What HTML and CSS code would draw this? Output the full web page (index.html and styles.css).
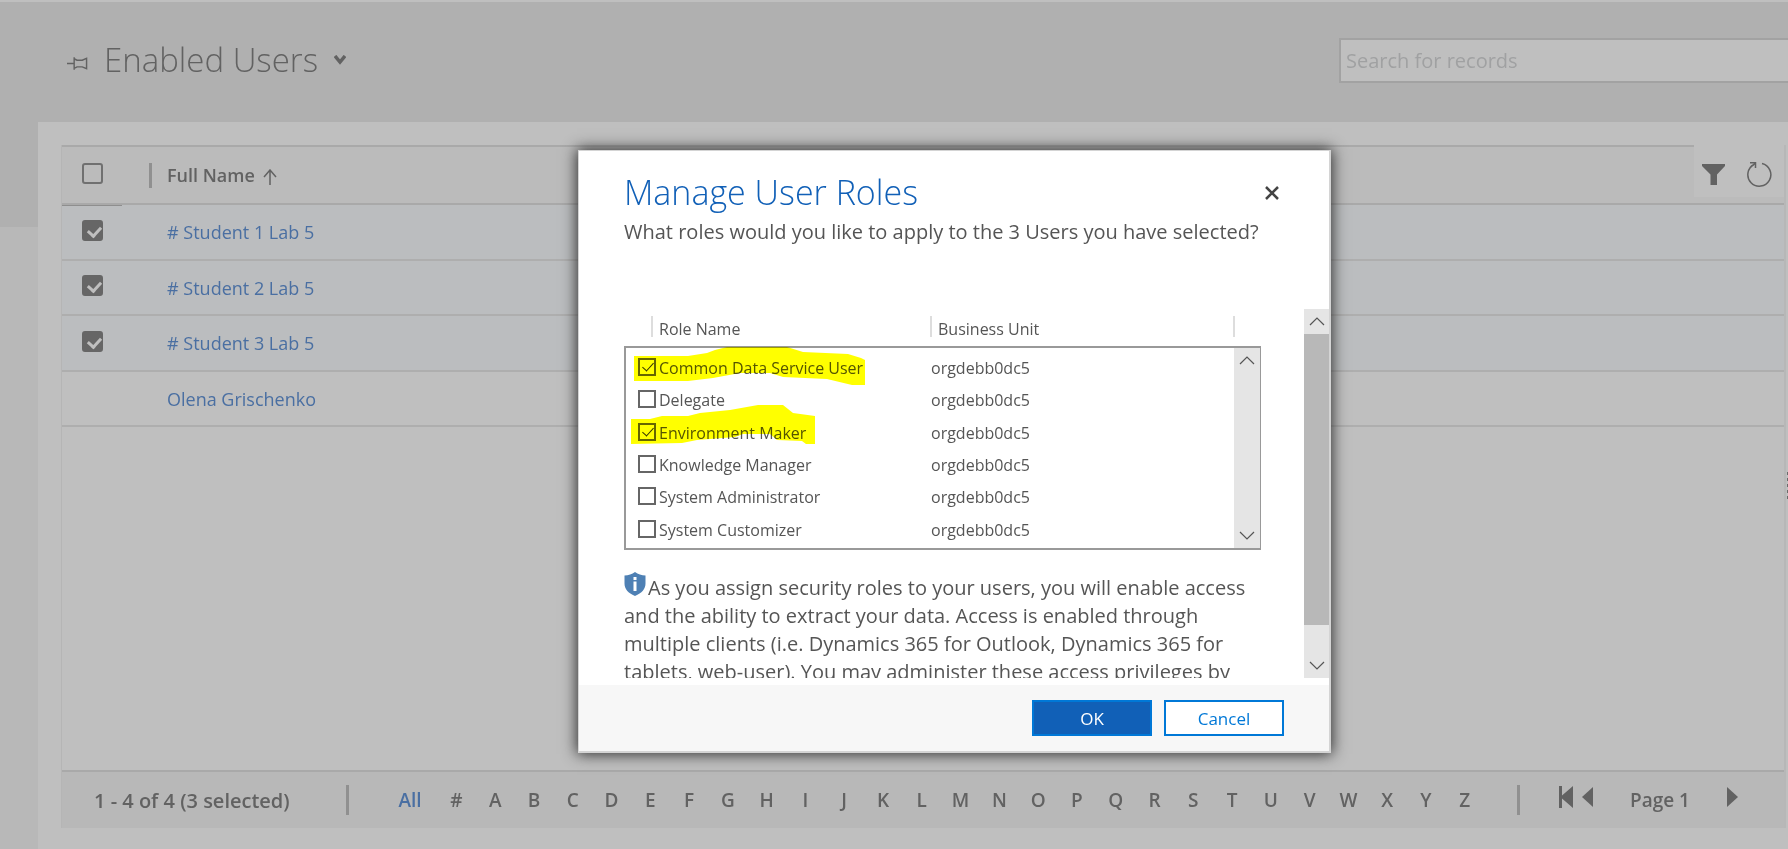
FILE: index.html
```
<!DOCTYPE html>
<html lang="en">
<head>
<meta charset="utf-8">
<title>Enabled Users</title>
<link rel="stylesheet" href="styles.css">
</head>
<body>
<div class="page">
  <header class="topbar">
    <button class="plain-button" aria-label="Pin view">
      <svg class="pin-icon" viewBox="0 0 22 14" fill="none" stroke="currentColor" stroke-width="1.5"><path d="M0 6.5h7M7.500 0v13M7.500 1.500l3 1.500h5.500l4.500-2v11l-4.500-2h-5.500l-3 1.500"/></svg>
    </button>
    <h1 class="view-title">Enabled Users</h1>
    <button class="plain-button view-switch" aria-label="Choose view">
      <svg class="caret-icon" viewBox="0 0 12 10" fill="none" stroke="currentColor" stroke-width="3.500"><path d="M1 1l5 6 5-6"/></svg>
    </button>
    <input class="search" type="text" placeholder="Search for records" aria-label="Search for records">
  </header>
  <div class="workspace">
    <div class="gutter"></div>
    <main class="panel">
      <div class="grid">
        <table class="users">
          <thead>
            <tr>
              <th class="check-cell"><input class="check" type="checkbox" aria-label="Select all"></th>
              <th class="name-head"><span class="name-label">Full Name
                <svg class="sort-icon" viewBox="0 0 14 16" fill="none" stroke="currentColor" stroke-width="1.500"><path d="M7 16V1M1 8l6-7 6 7"/></svg></span></th>
              <th class="tools-cell">
                <div class="tools">
                  <button class="plain-button" aria-label="Filter">
                    <svg class="filter-icon" viewBox="0 0 23 21" fill="currentColor"><path d="M0 0h23v2l-8 8.500V21H8.500V10.500L0 2z"/></svg>
                  </button>
                  <button class="plain-button" aria-label="Refresh">
                    <svg class="refresh-icon" viewBox="0 0 26 25" fill="none" stroke="currentColor" stroke-width="1.500"><path d="M16 1.500A11.500 11.500 0 1 1 8 2.500M4 .8h5.500V6M9.500 1l-4 3.500"/></svg>
                  </button>
                </div>
              </th>
            </tr>
          </thead>
          <tbody>
            <tr class="selected"><td class="check-cell first-cell"><input class="check" type="checkbox" checked aria-label="# Student 1 Lab 5"></td><td colspan="2"><a href="#"># Student 1 Lab 5</a></td></tr>
            <tr class="selected"><td class="check-cell"><input class="check" type="checkbox" checked aria-label="# Student 2 Lab 5"></td><td colspan="2"><a href="#"># Student 2 Lab 5</a></td></tr>
            <tr class="selected"><td class="check-cell"><input class="check" type="checkbox" checked aria-label="# Student 3 Lab 5"></td><td colspan="2"><a href="#"># Student 3 Lab 5</a></td></tr>
            <tr><td class="check-cell"></td><td colspan="2"><a href="#">Olena Grischenko</a></td></tr>
          </tbody>
        </table>
        <footer class="pager">
          <span class="count">1 - 4 of 4 (3 selected)</span>
          <span class="divider"></span>
          <nav class="letters" aria-label="Jump bar">
            <a class="all" href="#">All</a><a href="#">#</a><a href="#">A</a><a href="#">B</a><a href="#">C</a><a href="#">D</a><a href="#">E</a><a href="#">F</a><a href="#">G</a><a href="#">H</a><a href="#">I</a><a href="#">J</a><a href="#">K</a><a href="#">L</a><a href="#">M</a><a href="#">N</a><a href="#">O</a><a href="#">P</a><a href="#">Q</a><a href="#">R</a><a href="#">S</a><a href="#">T</a><a href="#">U</a><a href="#">V</a><a href="#">W</a><a href="#">X</a><a href="#">Y</a><a href="#">Z</a>
          </nav>
          <span class="divider"></span>
          <div class="paging">
            <button class="plain-button" aria-label="First page"><svg class="first-icon" viewBox="0 0 14 22" fill="currentColor"><path d="M0 0h3v9.500L14 0v22L3 12.500V22H0z"/></svg></button>
            <button class="plain-button" aria-label="Previous page"><svg class="step-icon" viewBox="0 0 11 20" fill="currentColor"><path d="M11 0v20L0 10z"/></svg></button>
            <span class="page-label">Page 1</span>
            <button class="plain-button" aria-label="Next page"><svg class="step-icon" viewBox="0 0 11 20" fill="currentColor"><path d="M0 0v20l11-10z"/></svg></button>
          </div>
        </footer>
      </div>
      <span class="grip"></span>
    </main>
  </div>
</div>

<div class="overlay">
  <section class="dialog" role="dialog" aria-modal="true" aria-labelledby="dialog-title">
    <header class="dialog-head">
      <div>
        <h2 class="dialog-title" id="dialog-title">Manage User Roles</h2>
        <p class="dialog-text">What roles would you like to apply to the 3 Users you have selected?</p>
      </div>
      <button class="plain-button close" aria-label="Close">
        <svg class="close-icon" viewBox="0 0 14 14" stroke="currentColor" stroke-width="2.500"><path d="M1 1l12 12M13 1L1 13"/></svg>
      </button>
    </header>
    <div class="dialog-body">
      <div class="body-content">
        <div class="role-head"><span class="role-col">Role Name</span><span class="unit-col">Business Unit</span></div>
        <div class="role-box">
          <div class="roles">
            <label class="role"><input class="box" type="checkbox" checked><span class="role-name">Common Data Service User</span><span>orgdebb0dc5</span></label>
            <label class="role"><input class="box" type="checkbox"><span class="role-name">Delegate</span><span>orgdebb0dc5</span></label>
            <label class="role"><input class="box" type="checkbox" checked><span class="role-name">Environment Maker</span><span>orgdebb0dc5</span></label>
            <label class="role"><input class="box" type="checkbox"><span class="role-name">Knowledge Manager</span><span>orgdebb0dc5</span></label>
            <label class="role"><input class="box" type="checkbox"><span class="role-name">System Administrator</span><span>orgdebb0dc5</span></label>
            <label class="role"><input class="box" type="checkbox"><span class="role-name">System Customizer</span><span>orgdebb0dc5</span></label>
          </div>
          <div class="scrollbar inner-bar">
            <svg class="arrow" viewBox="0 0 16 9" fill="none" stroke="currentColor" stroke-width="1.200"><path d="M1 8l7-7 7 7"/></svg>
            <svg class="arrow" viewBox="0 0 16 9" fill="none" stroke="currentColor" stroke-width="1.200"><path d="M1 1l7 7 7-7"/></svg>
          </div>
          <svg class="marker" viewBox="0 0 250 110" fill="#ff0"><path d="M10 10L64 10 83 7 91 4 103 1 163 1 179 6 224 8 237 12 241 14V39H228L203 33 159 31 146 27H116L89 32 64 35H10zM7 73H26L38 70H64L76 67 106 64 134 59H159L169 67 191 70V98H182L178 95 153 94 146 88H119L111 91 73 94 58 97 7 98z"/></svg>
        </div>
        <p class="dialog-text note"><svg class="shield" viewBox="0 0 22 24"><path d="M11 0c3 2.500 6.500 3.200 10.500 3.500v8C21.500 17 18 21 11 24 4 21 .5 17 .5 11.500v-8C4.500 3.200 8 2.500 11 0z" fill="#4e80b4"/><path d="M9.500 5h3v3h-3zM9.500 9.500h3V19h-3z" fill="#fff"/></svg>As you assign security roles to your users, you will enable access and the ability to extract your data. Access is enabled through multiple clients (i.e. Dynamics 365 for Outlook, Dynamics 365 for tablets, web-user). You may administer these access privileges by</p>
      </div>
      <div class="scrollbar outer-bar">
        <svg class="arrow" viewBox="0 0 16 9" fill="none" stroke="currentColor" stroke-width="1.200"><path d="M1 8l7-7 7 7"/></svg>
        <span class="thumb"></span>
        <svg class="arrow" viewBox="0 0 16 9" fill="none" stroke="currentColor" stroke-width="1.200"><path d="M1 1l7 7 7-7"/></svg>
      </div>
    </div>
    <footer class="dialog-foot">
      <button class="action primary">OK</button>
      <button class="action">Cancel</button>
    </footer>
  </section>
</div>
</body>
</html>
```
FILE: styles.css
```
* { box-sizing: border-box; }
body {
  margin: 0;
  font-family: "Open Sans", "Noto Sans", sans-serif;
  font-size: 18px;
  color: #626262;
  background: #bfbfbf;
}
h1, h2, p { margin: 0; font-weight: 400; }
a { color: #4a6fa2; text-decoration: none; }
svg { display: block; flex: none; }
.plain-button { padding: 0; border: 0; background: none; color: inherit; flex: none; }

.page { display: flex; flex-direction: column; min-height: 100vh; border-top: 2px solid #bfbfbf; }
.topbar {
  display: flex;
  align-items: center;
  height: 120px;
  padding: 0 0 4px 67px;
  background: #b0b0b0;
}
.pin-icon { width: 21px; height: 14px; margin-top: 8px; }
.view-title { margin-left: 16px; font-size: 33px; font-weight: 300; line-height: 48px; }
.view-switch { margin: 0 auto 0 16px; }
.caret-icon { width: 12px; height: 10px; }
.search {
  width: 449px;
  height: 45px;
  padding: 0 5px;
  border: 2px solid #a2a2a2;
  border-right: 0;
  background: #bfbfbf;
  font: inherit;
  font-size: 20px;
}
.search::placeholder { color: #a0a1a2; opacity: 1; }

.workspace { display: flex; flex: 1; }
.gutter { width: 38px; background: linear-gradient(#b0b0b0 105px, #b8b8b8 105px); }
.panel { position: relative; display: flex; flex: 1; padding: 23px 2px 21px 23px; background: #bfbfbf; }
.grip {
  position: absolute;
  top: 350px;
  right: 0;
  width: 1px;
  height: 27px;
  background: repeating-linear-gradient(#6a6a6a 0 3px, transparent 3px 6px);
}
.grid {
  display: flex;
  flex: 1;
  flex-direction: column;
  justify-content: space-between;
  border-left: 1px solid #b5b5b5;
  border-right: 2px solid #b7b7b7;
}
.users { width: 100%; border-spacing: 0; text-align: left; }
th, td { padding: 0; }
th { height: 60px; background: #bbb; border: solid #a9a9a9; border-width: 2px 0; font-weight: 600; }
td { height: 56px; border-bottom: 2px solid #aeaeae; }
tr:nth-child(even) td { height: 55px; }
.selected { background: #bbbdbf; }
.check-cell { width: 87px; padding: 0 0 4px 20px; }
.first-cell { background: linear-gradient(90deg, #8e8e8e 60px, transparent 60px) top / 100% 1px no-repeat; }
.name-label { display: flex; align-items: center; gap: 8px; height: 25px; padding-left: 15px; border-left: 3px solid #909090; }
.sort-icon { width: 14px; height: 16px; margin-top: 4px; }
td + td { padding-left: 18px; }
.check {
  appearance: none;
  display: block;
  width: 21px;
  height: 21px;
  margin: 0;
  border: 2px solid #707070;
  border-radius: 3px;
}
.check:checked { border-color: #666; background: #666; }
.check:checked::after {
  content: "";
  display: block;
  width: 6px;
  height: 10px;
  margin: 2px 0 0 6px;
  border: solid #bfbfbf;
  border-width: 0 3px 3px 0;
  transform: rotate(42deg);
}
.tools-cell { width: 90px; border-top: 0; vertical-align: top; }
.tools { display: flex; align-items: center; gap: 21px; height: 52px; padding: 6px 0 0 8px; background: #bfbfbf; }
.filter-icon { width: 23px; height: 21px; }
.refresh-icon { width: 26px; height: 25px; }

.pager {
  display: flex;
  align-items: center;
  height: 58px;
  padding: 0 46px 0 32px;
  border-top: 2px solid #a9a9a9;
  background: #b8b8b8;
  font-size: 19px;
  font-weight: 600;
}
.count { width: 252px; font-size: 20px; white-space: nowrap; }
.divider { width: 3px; height: 30px; background: #909090; }
.letters { display: flex; flex: 1; margin: 0 33px 0 34px; }
.letters a { flex: 1; color: inherit; text-align: center; }
.letters .all { flex: 0 0 54px; color: #4a6fa2; }
.paging { display: flex; align-items: center; margin-left: 39px; }
.first-icon { width: 14px; height: 22px; margin: 0 9px 6px 0; }
.step-icon { width: 11px; height: 20px; margin-bottom: 6px; }
.page-label { width: 97px; margin: 0 0 0 37px; }

.overlay {
  position: absolute;
  inset: 0;
  display: flex;
  align-items: center;
  justify-content: center;
  padding: 54px 0 0 121px;
}
.dialog {
  width: 753px;
  border: solid #d4d4d4;
  border-width: 1px 2px 2px 1px;
  background: #fff;
  color: #555;
  box-shadow: 0 0 14px 1px #2a2a2a;
}
.dialog-head { display: flex; justify-content: space-between; height: 158px; padding: 17px 50px 0 45px; }
.dialog-title { color: #1160b7; font-size: 34px; font-weight: 300; line-height: 48px; }
.dialog-text { font-size: 20px; line-height: 28px; }
.dialog-title + .dialog-text { margin-top: 2px; }
.close { align-self: flex-start; margin: 18px 0 0 -20px; color: #444; }
.close-icon { width: 14px; height: 14px; }
.dialog-body { display: flex; justify-content: space-between; height: 369px; overflow: hidden; }
.body-content { width: 637px; margin: 7px 0 0 45px; font-size: 16px; }
.role-head { display: flex; height: 21px; margin: 0 26px 9px 27px; border: solid #ddd; border-width: 0 2px; line-height: 26px; }
.role-col { width: 277px; padding-left: 6px; }
.unit-col { padding-left: 6px; border-left: 2px solid #ddd; }
.role-box { position: relative; display: flex; height: 204px; border: 2px solid #999; border-right-width: 1px; }
.roles { display: grid; flex: 1; padding: 4px 0 2px 12px; }
.role { display: flex; align-items: center; }
.role-name { width: 275px; padding-left: 3px; }
.box {
  appearance: none;
  width: 18px;
  height: 18px;
  margin: 0 0 2px;
  border: 2px solid #666;
}
.box:checked::after {
  content: "";
  display: block;
  width: 5px;
  height: 10px;
  margin: 0 0 0 5px;
  border: solid #333;
  border-width: 0 1px 1px 0;
  transform: rotate(42deg);
}
.marker { position: absolute; top: -2px; left: -2px; width: 250px; height: 110px; mix-blend-mode: multiply; pointer-events: none; }
.scrollbar { display: flex; flex-direction: column; align-items: center; justify-content: space-between; padding: 8px 0; background: #e5e5e5; color: #555; }
.inner-bar { width: 26px; }
.outer-bar { width: 25px; }
.arrow { width: 16px; height: 9px; }
.thumb { width: 25px; height: 291px; margin: 0 0 28px; background: #b8b8b8; }
.note { margin-top: 24px; }
.shield { display: inline-block; width: 22px; height: 24px; margin: -4px 2px 0 0; vertical-align: -1px; }
.dialog-foot { display: flex; gap: 12px; justify-content: flex-end; margin-top: 7px; padding: 15px 45px; background: #f7f7f7; }
.action { width: 120px; height: 36px; padding: 0; border: 2px solid #0078d7; background: #fff; color: #0078d7; font: inherit; font-size: 17px; }
.primary { background: #1160b7; color: #fff; }
```
